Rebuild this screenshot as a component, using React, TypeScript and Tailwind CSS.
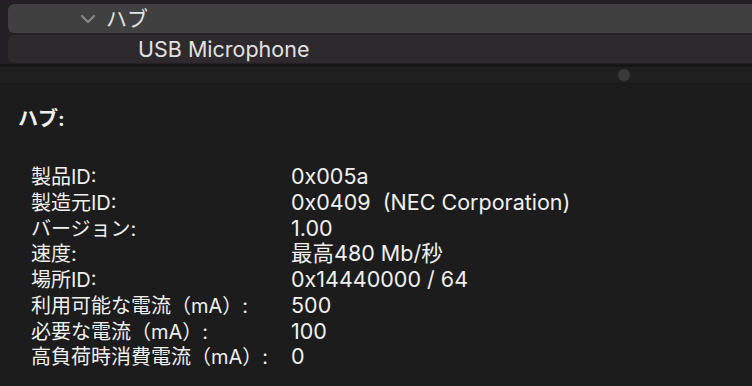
const font = { fontFamily: '"Inter", "Noto Sans CJK JP", sans-serif' };

const rows: [string, string][] = [
  ['製品ID:', '0x005a'],
  ['製造元ID:', '0x0409  (NEC Corporation)'],
  ['バージョン:', '1.00'],
  ['速度:', '最高480 Mb/秒'],
  ['場所ID:', '0x14440000 / 64'],
  ['利用可能な電流（mA）:', '500'],
  ['必要な電流（mA）:', '100'],
  ['高負荷時消費電流（mA）:', '0'],
];

export default function App() {
  return (
    <div className="flex h-[386px] w-[752px] flex-col overflow-hidden bg-[#1c1c1c]" style={font}>
      {/* Device tree */}
      <div className="flex h-[64px] shrink-0 flex-col gap-[2px] bg-[#241f24] pl-[8px] pt-[4px]">
        <div className="flex h-[29px] items-center rounded-l-[6px] bg-[#404040] pl-[72px] text-[21px] text-[#e2e2e2]">
          <svg className="mr-[10px] h-[10px] w-[16px]" viewBox="0 0 16 10" fill="none">
            <path d="M2 2l6 6 6-6" stroke="#8c8c8c" strokeWidth={2} strokeLinecap="round" strokeLinejoin="round" />
          </svg>
          <span>ハブ</span>
        </div>
        <div className="flex h-[28px] items-center rounded-l-[6px] bg-[#2d292d] pl-[130px] text-[21.5px] text-[#e2e2e2]">
          USB Microphone
        </div>
      </div>

      {/* Split handle */}
      <div className="h-[3px] shrink-0 bg-[#171717]" />
      <div className="flex h-[16px] shrink-0 items-center bg-[#1f1f1f] pl-[618px]">
        <span className="h-[12px] w-[12px] rounded-full bg-[#3a3a3a]" />
      </div>
      <div className="h-[1px] shrink-0 bg-[#181818]" />

      {/* Details */}
      <div className="pl-[18px] pt-[21px] text-[#f0f0f0]">
        <h2 className="text-[20px] font-bold leading-[28px]">ハブ:</h2>
        <dl className="mt-[31px] grid auto-rows-[25.75px] grid-cols-[260px_1fr] items-baseline pl-[13px] leading-[25px]">
          {rows.map(([label, value]) => (
            <div key={label} className="contents">
              <dt className="whitespace-nowrap text-[20px]">{label}</dt>
              <dd className="whitespace-pre text-[21.5px]">{value}</dd>
            </div>
          ))}
        </dl>
      </div>
    </div>
  );
}
